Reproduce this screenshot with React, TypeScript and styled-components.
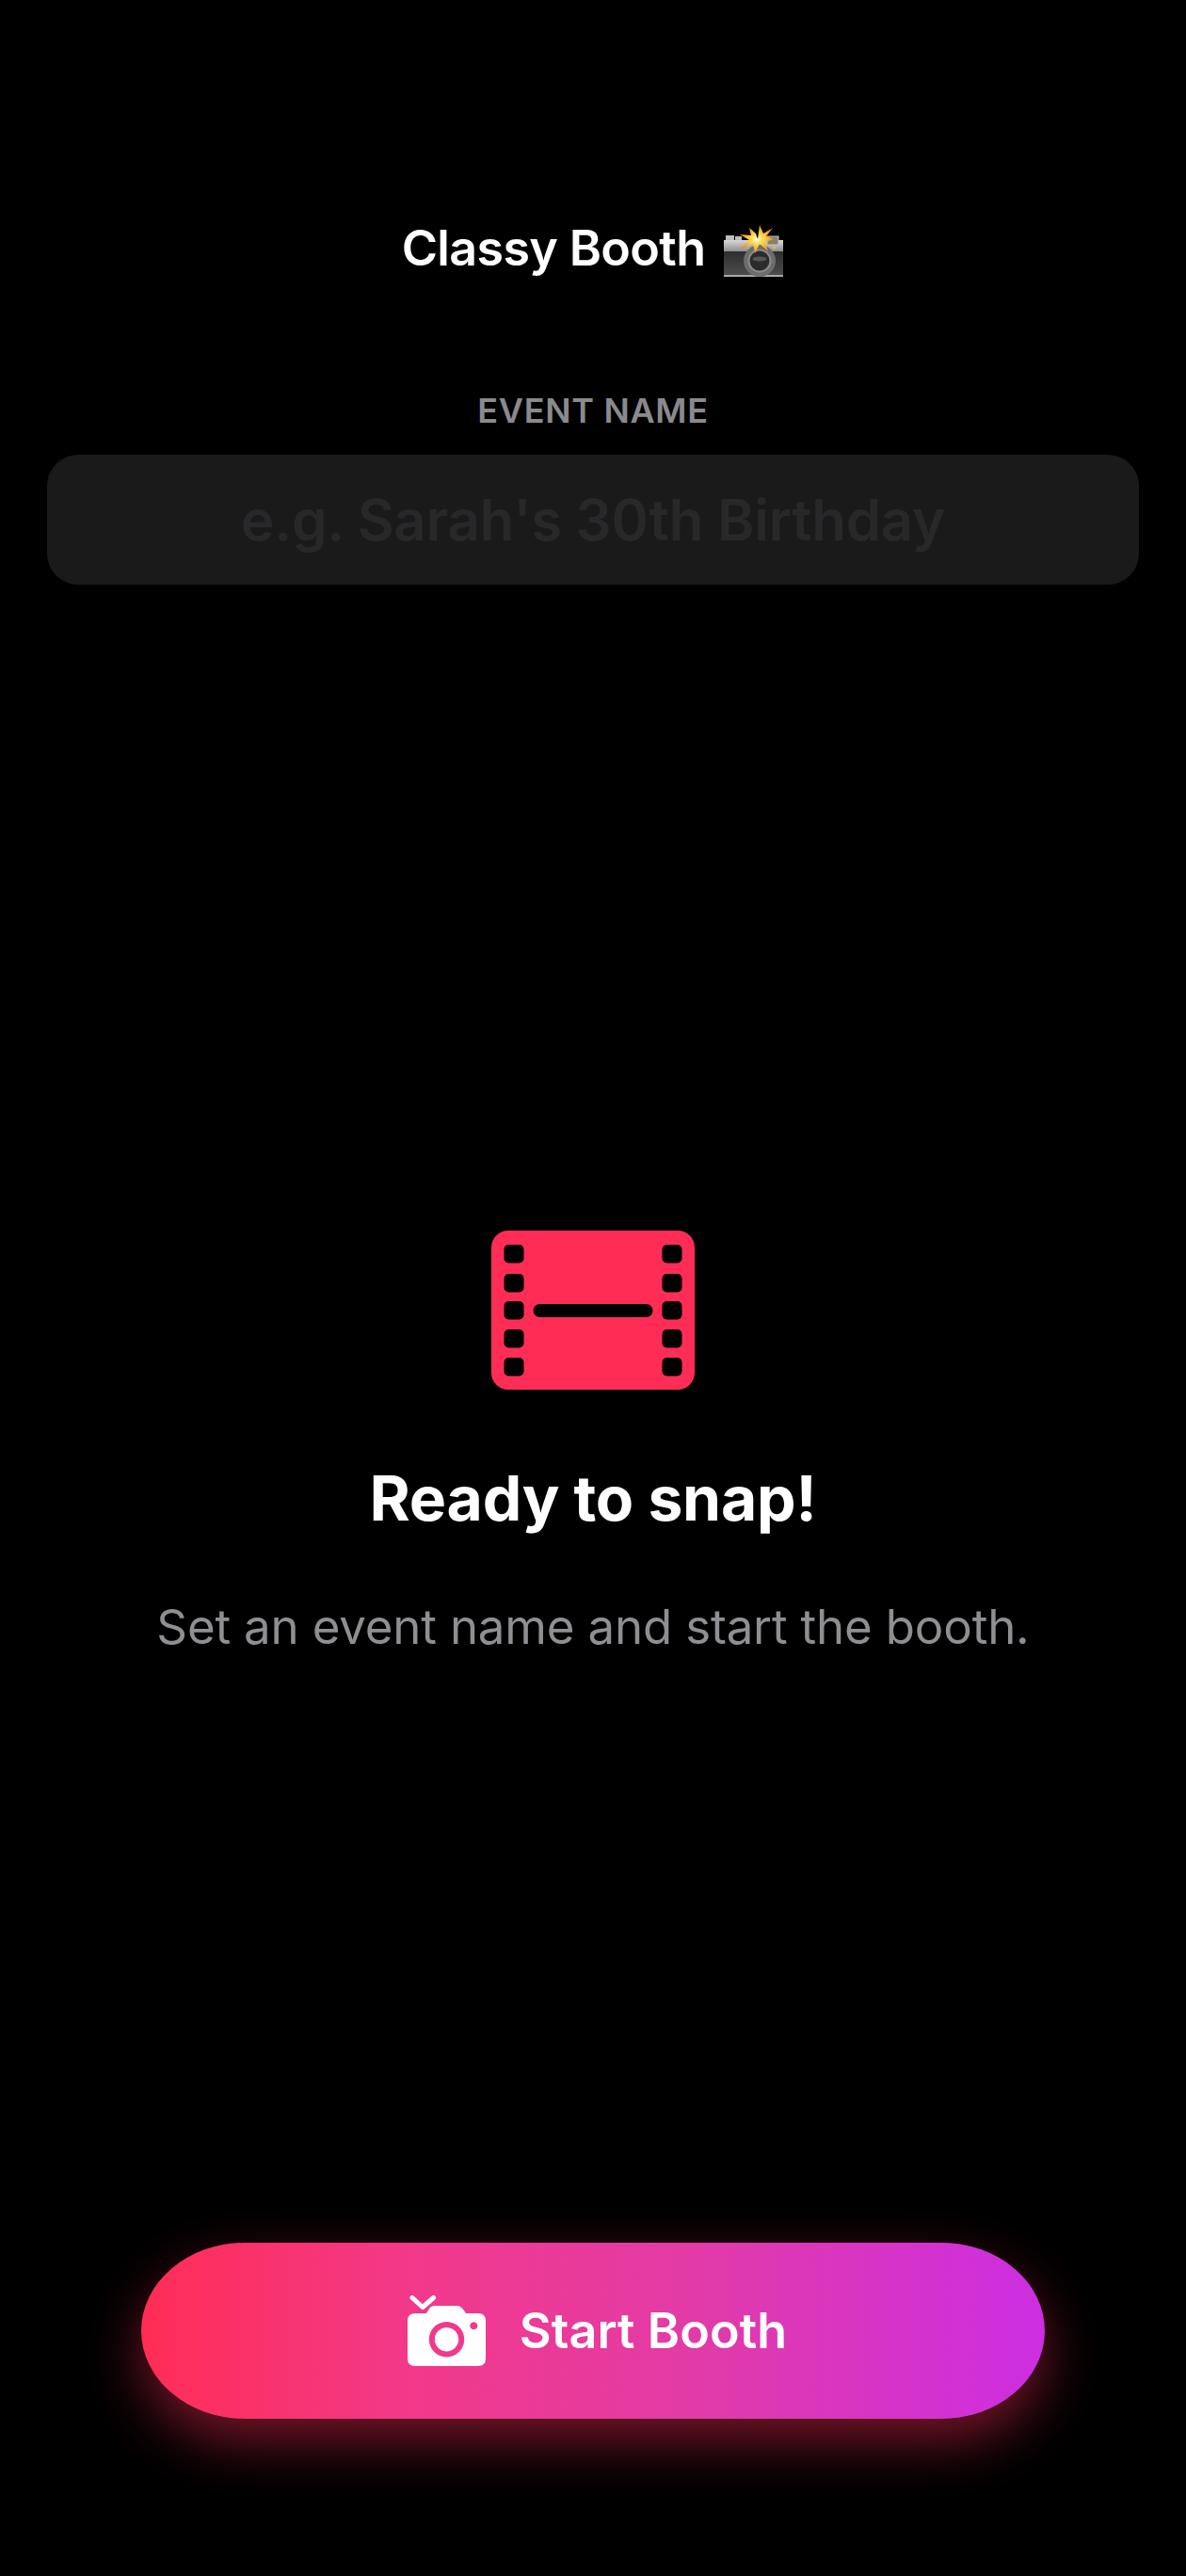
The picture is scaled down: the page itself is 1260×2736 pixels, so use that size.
import React from 'react';
import styled, { createGlobalStyle } from 'styled-components';

const GlobalStyle = createGlobalStyle`
  html, body {
    margin: 0;
    padding: 0;
    background: #000;
  }
  * {
    box-sizing: border-box;
  }
`;

const Screen = styled.div`
  display: flex;
  flex-direction: column;
  align-items: center;
  width: 1260px;
  height: 2736px;
  padding: 233px 50px 167px;
  background: #000;
  color: #fff;
  font-family: Inter, 'Liberation Sans', sans-serif;
  overflow: hidden;
`;

const Title = styled.h1`
  display: flex;
  align-items: flex-end;
  gap: 20px;
  height: 62px;
  margin: 0;
  font-size: 52px;
  font-weight: 600;
  line-height: 62px;
  letter-spacing: -0.65px;
`;

const FieldLabel = styled.label`
  margin-top: 119px;
  font-size: 36px;
  font-weight: 600;
  line-height: 44px;
  letter-spacing: 0.7px;
  color: #8a8a8e;
`;

const NameInput = styled.div`
  display: flex;
  align-items: center;
  justify-content: center;
  width: 100%;
  height: 138px;
  margin-top: 25px;
  border-radius: 33px;
  background: #1a1a1b;
  font-size: 60px;
  font-weight: 600;
  letter-spacing: -0.3px;
  color: #28282a;
`;

const EmptyState = styled.section`
  display: flex;
  flex-direction: column;
  align-items: center;
  margin-top: 686px;
`;

const EmptyTitle = styled.h2`
  margin: 75px 0 0;
  font-size: 66px;
  font-weight: 700;
  line-height: 80px;
  letter-spacing: -0.25px;
`;

const EmptyText = styled.p`
  margin: 66px 0 0;
  font-size: 51px;
  font-weight: 400;
  line-height: 62px;
  letter-spacing: -0.18px;
  color: #8e8e93;
`;

const StartButton = styled.button`
  display: flex;
  align-items: center;
  justify-content: center;
  gap: 36px;
  width: 960px;
  height: 187px;
  margin-top: auto;
  padding: 0 0 0 9px;
  border: 0;
  border-radius: 110px / 93.5px;
  background: linear-gradient(90deg, #ff2d55 0%, #f2398a 30%, #e33ba6 60%, #cc2ee2 100%);
  box-shadow: 0 24px 58px rgba(255, 45, 85, 0.46);
  color: #fff;
  font-family: inherit;
  font-size: 52px;
  font-weight: 600;
  letter-spacing: 0.1px;
`;

const FlashCamera = () => (
  <svg width="64" height="56" viewBox="0 0 64 56" aria-hidden="true">
    <defs>
      <linearGradient id="camBody" x1="0" y1="0" x2="0" y2="1">
        <stop offset="0" stopColor="#2e2e2e" />
        <stop offset="1" stopColor="#4c4c4c" />
      </linearGradient>
      <linearGradient id="camTop" x1="0" y1="0" x2="0" y2="1">
        <stop offset="0" stopColor="#d8d8d8" />
        <stop offset="1" stopColor="#8f8f8f" />
      </linearGradient>
      <radialGradient id="flashCore">
        <stop offset="0" stopColor="#fff" />
        <stop offset="0.3" stopColor="#ffe25a" />
        <stop offset="1" stopColor="#f68a0e" />
      </radialGradient>
    </defs>
    <rect x="2" y="11" width="9" height="6" fill="#bdbdbd" />
    <rect x="12" y="12" width="7" height="5" fill="#bdbdbd" />
    <rect x="0" y="16" width="63" height="12" fill="url(#camTop)" />
    <rect x="0" y="28" width="63" height="25" fill="url(#camBody)" />
    <rect x="0" y="53" width="63" height="2" fill="#a8a8a8" />
    <rect x="46" y="12" width="12" height="9" fill="#8a8070" stroke="#c4c4c4" />
    <circle cx="53.5" cy="24" r="1.6" fill="#f2b92e" />
    <circle cx="38" cy="38" r="17" fill="#6d6d6d" />
    <circle cx="38" cy="38" r="11.5" fill="#2b2b2b" stroke="#8b8b8b" strokeWidth="2" />
    <ellipse cx="38" cy="36" rx="7.5" ry="2.5" fill="#565656" />
    <polygon
      points="36,15 38,0 42,9 52,3 45,12 53,15 44,18 47,28 38,20 33,30 31,20 18,25 27,16 17,10 29,11 27,3 34,9"
      fill="url(#flashCore)"
    />
  </svg>
);

const FilmIcon = () => (
  <svg width="216" height="169" viewBox="0 0 216 169" aria-hidden="true">
    <rect width="216" height="169" rx="18" fill="#ff2d55" />
    {[15, 46, 75, 105, 135].map((y) => (
      <React.Fragment key={y}>
        <rect x="13.5" y={y} width="21" height="19.5" rx="5" fill="#000" />
        <rect x="181.5" y={y} width="21" height="19.5" rx="5" fill="#000" />
      </React.Fragment>
    ))}
    <rect x="44.5" y="78" width="127" height="14" rx="7" fill="#000" />
  </svg>
);

const CameraIcon = () => (
  <svg width="83" height="75" viewBox="0 0 83 75" aria-hidden="true">
    <path
      d="M5 2.500 16 12.500 27.500 2.500"
      fill="none"
      stroke="#fff"
      strokeWidth="5"
      strokeLinecap="round"
      strokeLinejoin="round"
    />
    <path
      fillRule="evenodd"
      fill="#fff"
      d="M29 11H52Q56 11 58.500 14L62 19H75Q83 19 83 27V67Q83 75 75 75H8Q0 75 0 67V27Q0 19 8 19H20L23 14Q25 11 29 11ZM41.500 28a18.700 18.700 0 1 0 0.010 0ZM41.500 34a12.700 12.700 0 1 1 -0.010 0ZM70.300 28.300a4 4 0 1 0 0.010 0Z"
    />
  </svg>
);

export default function App() {
  return (
    <>
      <GlobalStyle />
      <Screen>
        <Title>
          Classy Booth
          <FlashCamera />
        </Title>
        <FieldLabel>EVENT NAME</FieldLabel>
        <NameInput>e.g. Sarah's 30th Birthday</NameInput>
        <EmptyState>
          <FilmIcon />
          <EmptyTitle>Ready to snap!</EmptyTitle>
          <EmptyText>Set an event name and start the booth.</EmptyText>
        </EmptyState>
        <StartButton>
          <CameraIcon />
          Start Booth
        </StartButton>
      </Screen>
    </>
  );
}
